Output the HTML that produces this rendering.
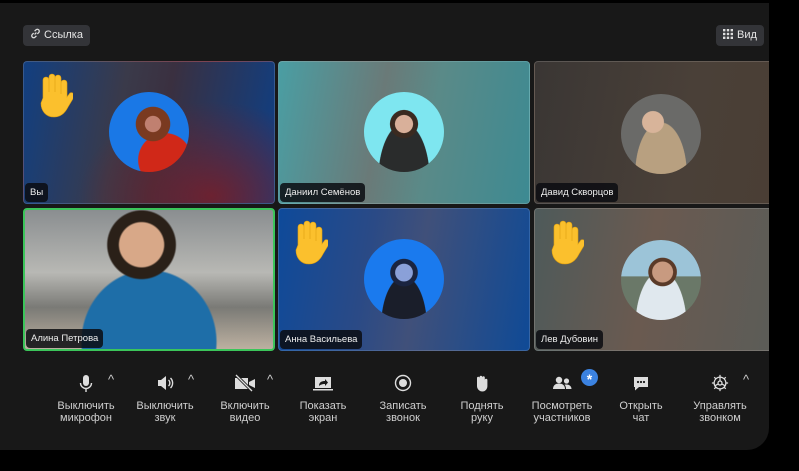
<!DOCTYPE html>
<html><head><meta charset="utf-8">
<style>
*{margin:0;padding:0;box-sizing:border-box}
body{width:799px;height:471px;background:#000;font-family:"Liberation Sans","DejaVu Sans",sans-serif;position:relative;overflow:hidden}
.panel{position:absolute;left:0;top:3px;width:769px;height:447px;background:#181818;border-radius:0 0 22px 0;overflow:hidden}
.clip{position:absolute;left:0;top:0;width:769px;height:450px;overflow:hidden}
.btn{position:absolute;top:22px;height:21px;background:#333438;border-radius:4px;color:#e6e6e6;font-size:11px;line-height:21px;padding:0 7px 0 7px}
.tile{position:absolute;width:252px;height:143px;border-radius:4px;border:1px solid rgba(255,255,255,.15);overflow:hidden}
.av{position:absolute;width:80px;height:80px;border-radius:50%;left:85px;top:30px;overflow:hidden}
.name{position:absolute;left:1px;bottom:1px;background:rgba(10,12,16,.85);color:#eee;font-size:9.5px;padding:4px 5px;border-radius:4px}
.hand{position:absolute;left:9px;top:10px}
.tb{position:absolute;top:374px;width:90px;text-align:center;color:#cfcfcf;font-size:11px;line-height:12px}
.tb svg{display:block;margin:0 auto 8px}
.car{position:absolute;top:372px;color:#ccc;font-size:13px}
</style></head><body>
<div class="panel">
<div class="btn" style="left:23px"><svg width="11" height="11" viewBox="0 0 12 12" style="vertical-align:-1px;margin-right:3px" fill="none" stroke="#ddd" stroke-width="1.4"><path d="M5 7l2-2M4 5.5L2.5 7a2 2 0 003 3L7 8.5M8 6.5L9.5 5a2 2 0 00-3-3L5 3.5"/></svg>Ссылка</div>
<div class="btn" style="left:716px"><svg width="10" height="10" viewBox="0 0 10 10" fill="#ddd" style="vertical-align:-1px;margin-right:4px"><rect x="0" y="0" width="2.4" height="2.4"/><rect x="3.8" y="0" width="2.4" height="2.4"/><rect x="7.6" y="0" width="2.4" height="2.4"/><rect x="0" y="3.8" width="2.4" height="2.4"/><rect x="3.8" y="3.8" width="2.4" height="2.4"/><rect x="7.6" y="3.8" width="2.4" height="2.4"/><rect x="0" y="7.6" width="2.4" height="2.4"/><rect x="3.8" y="7.6" width="2.4" height="2.4"/><rect x="7.6" y="7.6" width="2.4" height="2.4"/></svg>Вид</div>
</div>

<svg width="0" height="0" style="position:absolute"><defs>
<symbol id="h" viewBox="0 0 40 46"><path d="M10 26V8a3 3 0 016 0v12V5a3 3 0 016 0v15V6a3 3 0 016 0v16V11a3 3 0 016 0v14l3-4a3 3 0 014 4l-6 10c-3 6-7 10-14 10c-8 0-13-6-13-14z" fill="#fbc02d" stroke="#e0a010" stroke-width=".6"/></symbol>
</defs></svg>

<div class="clip">
<div class="tile" style="left:23px;top:61px;background:radial-gradient(ellipse at 75% 95%,rgba(120,30,40,.85),transparent 50%),linear-gradient(100deg,#123f80 0%,#3a3a4a 38%,#3a3040 55%,#0e3f85 100%)">
<svg class="hand" width="40" height="46"><use href="#h"/></svg>
<div class="av" style="left:85px;top:30px;background:radial-gradient(circle at 55% 40%,#c08070 0 12%,#7a3a20 13% 26%,transparent 27%),radial-gradient(circle at 70% 85%,#d02818 0 30%,transparent 31%),#1a78e6"></div>
<div class="name">Вы</div></div>

<div class="tile" style="left:278px;top:61px;background:linear-gradient(100deg,#4a9ea3 0%,#6a7a78 40%,#5a8a88 60%,#3d8a92 100%)">
<div class="av" style="background:radial-gradient(circle at 50% 40%,#d9b09a 0 14%,#3a2a20 15% 22%,transparent 23%),radial-gradient(ellipse at 50% 110%,#2a2c2c 0 45%,transparent 46%),#7ee6f0"></div>
<div class="name">Даниил Семёнов</div></div>

<div class="tile" style="left:534px;top:61px;width:250px;background:linear-gradient(100deg,#3a3634 0%,#4a4038 60%,#4a3e34 100%)">
<div class="av" style="left:86px;top:32px;background:radial-gradient(circle at 40% 35%,#d8b49a 0 15%,transparent 16%),radial-gradient(ellipse at 50% 100%,#b8a080 0 45%,transparent 46%),#6a6a68"></div>
<div class="name">Давид Скворцов</div></div>

<div class="tile" style="left:23px;top:208px;border:2px solid #3bc55a;background:radial-gradient(circle at 47% 25%,#d8a888 0 13%,#2a2018 14% 20%,transparent 21%),radial-gradient(ellipse at 50% 95%,#1e6ea8 0 38%,transparent 39%),linear-gradient(180deg,#8a8e90 0%,#b8b8b4 45%,#7a7a76 70%,#bcb0a0 100%)">
<div class="name">Алина Петрова</div></div>

<div class="tile" style="left:278px;top:208px;background:linear-gradient(100deg,#0e4a9a 0%,#2a4a86 35%,#40507a 55%,#0f4a96 100%)">
<svg class="hand" width="40" height="46"><use href="#h"/></svg>
<div class="av" style="background:radial-gradient(circle at 50% 42%,#8aa0d8 0 14%,#1a2440 15% 22%,transparent 23%),radial-gradient(ellipse at 50% 110%,#1a1e2a 0 40%,transparent 41%),#1a7aee"></div>
<div class="name">Анна Васильева</div></div>

<div class="tile" style="left:534px;top:208px;width:250px;background:linear-gradient(100deg,#4e5a5a 0%,#6a5a50 45%,#5a5c58 100%)">
<svg class="hand" width="40" height="46"><use href="#h"/></svg>
<div class="av" style="left:86px;top:31px;background:radial-gradient(circle at 52% 40%,#c89a80 0 16%,#5a3a28 17% 22%,transparent 23%),radial-gradient(ellipse at 50% 110%,#e0e8ee 0 45%,transparent 46%),linear-gradient(180deg,#9cc4d8 0 45%,#6a7868 46%)"></div>
<div class="name">Лев Дубовин</div></div>
</div>

<!-- toolbar -->
<div class="tb" style="left:41px"><svg width="18" height="18" viewBox="0 0 18 18" fill="#ddd"><rect x="6" y="1" width="6" height="11" rx="3"/><path d="M3.5 9a5.5 5.5 0 0011 0" fill="none" stroke="#ddd" stroke-width="1.4"/><rect x="8.3" y="14" width="1.4" height="4"/></svg>Выключить<br>микрофон</div>
<div class="car" style="left:108px">^</div>
<div class="tb" style="left:120px"><svg width="18" height="18" viewBox="0 0 18 18"><path d="M2 6h3l5-4v14l-5-4H2z" fill="#ddd"/><path d="M12.5 6a4 4 0 010 6M14.5 4a7 7 0 010 10" fill="none" stroke="#ddd" stroke-width="1.4"/></svg>Выключить<br>звук</div>
<div class="car" style="left:188px">^</div>
<div class="tb" style="left:200px"><svg width="22" height="18" viewBox="0 0 22 18"><path d="M1 4h13v11H1zM15 8l6-3v9l-6-3z" fill="#ddd"/><path d="M2 1l16 16" stroke="#181818" stroke-width="3"/><path d="M2 1l16 16" stroke="#ddd" stroke-width="1.3"/></svg>Включить<br>видео</div>
<div class="car" style="left:267px">^</div>
<div class="tb" style="left:278px"><svg width="22" height="18" viewBox="0 0 22 18"><rect x="3" y="3" width="16" height="11" fill="#ddd"/><rect x="1" y="15" width="20" height="1.5" fill="#ddd"/><path d="M7 12c0-4 3-5 6-5V5l3 3.5-3 3.5v-2c-3 0-5 1-6 2z" fill="#181818"/></svg>Показать<br>экран</div>
<div class="tb" style="left:358px"><svg width="18" height="18" viewBox="0 0 18 18"><circle cx="9" cy="9" r="7.5" fill="none" stroke="#ddd" stroke-width="1.4"/><circle cx="9" cy="9" r="4" fill="#ddd"/></svg>Записать<br>звонок</div>
<div class="tb" style="left:437px"><svg width="18" height="18" viewBox="0 0 18 18"><path d="M4 9V4a1.3 1.3 0 012.6 0V3a1.3 1.3 0 012.6 0v.5a1.3 1.3 0 012.6 0V6a1.3 1.3 0 012.6 0v6c0 3-2 5.5-5 5.5S4 15 4 12z" fill="#ddd"/></svg>Поднять<br>руку</div>
<div class="tb" style="left:517px"><svg width="22" height="18" viewBox="0 0 22 18" fill="#ddd"><circle cx="8" cy="6" r="3.2"/><path d="M2 15c0-4 3-5.5 6-5.5s6 1.5 6 5.5z"/><circle cx="15.5" cy="7" r="2.6"/><path d="M15 15c0-2-.5-3.5-1.5-4.3 3-.8 7 .3 7 4.3z"/></svg>Посмотреть<br>участников</div>
<div style="position:absolute;left:581px;top:369px;width:17px;height:17px;border-radius:50%;background:#3b82e0;color:#fff;font-size:14px;font-weight:bold;text-align:center;line-height:20px">*</div>
<div class="tb" style="left:596px"><svg width="18" height="18" viewBox="0 0 18 18"><path d="M2 3h14v10H7l-4 3.5V13H2z" fill="#ddd"/><circle cx="6" cy="8" r="1.1" fill="#181818"/><circle cx="9" cy="8" r="1.1" fill="#181818"/><circle cx="12" cy="8" r="1.1" fill="#181818"/></svg>Открыть<br>чат</div>
<div class="tb" style="left:675px"><svg width="20" height="18" viewBox="0 0 20 20" fill="none" stroke="#ddd" stroke-width="1.4"><circle cx="10" cy="10" r="6.5"/><circle cx="10" cy="10" r="2.2"/><path d="M10 1v2.5M10 16.5V19M1 10h2.5M16.5 10H19M3.6 3.6l1.8 1.8M14.6 14.6l1.8 1.8M3.6 16.4l1.8-1.8M14.6 5.4l1.8-1.8M10 7.8V4M8 11l-3.5 2M12 11l3.5 2"/></svg>Управлять<br>звонком</div>
<div class="car" style="left:743px">^</div>
</body></html>
